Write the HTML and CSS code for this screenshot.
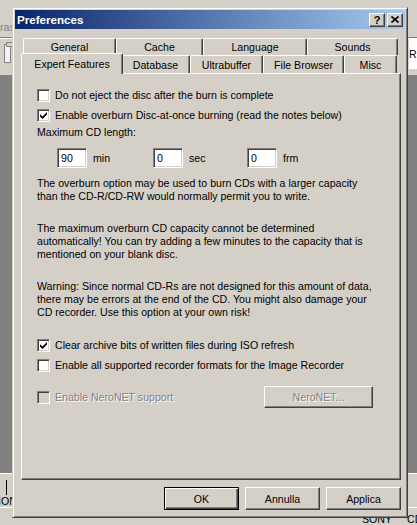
FILE: index.html
```html
<!DOCTYPE html>
<html lang="en">
<head>
    <meta charset="UTF-8">
    <meta name="viewport" content="width=device-width, initial-scale=1.0">
    <title>Preferences</title>
    <link rel="stylesheet" href="styles.css">
</head>
<body>

<!-- main application behind the dialog -->
<div id="desktop">
    <div id="toolbar">
        <div class="tb-top"><span class="tb-menu">ras</span></div>
        <div class="tb-bottom">
            <svg class="tb-icon" width="10" height="23" viewBox="0 0 10 23">
                <path d="M1.5 3.5h6v18h-6z" fill="#f4f4f4" stroke="#808080"/>
                <path d="M3.5 1.5h6v4h-6z" fill="#d4d0c8" stroke="#808080"/>
            </svg>
            <div class="tb-edit">R</div>
        </div>
    </div>
    <div id="workspace"></div>
    <div id="statusbar">
        <div class="sb-tree">
            <span class="sb-line"></span>
            <span class="sb-label">ION</span>
        </div>
        <div class="sb-list">
            <span class="sb-sony">SONY</span>
            <span class="sb-cd">CD</span>
        </div>
    </div>
</div>

<div id="prefs" class="window">
    <div class="caption">
        <span class="caption-title">Preferences</span>
        <div class="caption-buttons">
            <div class="cap-btn">?</div>
            <div class="cap-btn">
                <svg width="8" height="7" viewBox="0 0 8 7">
                    <path d="M0.5 0.5l7 6M7.5 0.5l-7 6" stroke="#000" stroke-width="1.6"/>
                </svg>
            </div>
        </div>
    </div>

    <div class="window-body">
        <div class="tab-row back">
            <div class="tab w-general">General</div>
            <div class="tab w-cache">Cache</div>
            <div class="tab w-language">Language</div>
            <div class="tab w-sounds">Sounds</div>
        </div>
        <div class="tab-row front">
            <div class="tab active w-expert">Expert Features</div>
            <div class="tab w-database">Database</div>
            <div class="tab w-ultra">Ultrabuffer</div>
            <div class="tab w-browser">File Browser</div>
            <div class="tab w-misc">Misc</div>
        </div>

        <div class="tab-panel">
            <div class="check-row">
                <span class="checkbox"></span>
                <span>Do not eject the disc after the burn is complete</span>
            </div>
            <div class="check-row">
                <span class="checkbox"><svg class="tick" width="7" height="7" viewBox="0 0 7 7"><path d="M0 2.2L2.5 4.6L7 0.1V2.6L2.5 7L0 4.6Z" fill="#000"/></svg></span>
                <span>Enable overburn Disc-at-once burning (read the notes below)</span>
            </div>

            <div class="length-label">Maximum CD length:</div>
            <div class="length-fields">
                <div class="field"><div class="edit">90</div><span>min</span></div>
                <div class="field"><div class="edit">0</div><span>sec</span></div>
                <div class="field"><div class="edit">0</div><span>frm</span></div>
            </div>

            <p class="note first">The overburn option may be used to burn CDs with a larger capacity<br>than the CD-R/CD-RW would normally permit you to write.</p>
            <p class="note">The maximum overburn CD capacity cannot be determined<br>automatically! You can try adding a few minutes to the capacity that is<br>mentioned on your blank disc.</p>
            <p class="note">Warning: Since normal CD-Rs are not designed for this amount of data,<br>there may be errors at the end of the CD. You might also damage your<br>CD recorder. Use this option at your own risk!</p>

            <div class="check-row spaced">
                <span class="checkbox"><svg class="tick" width="7" height="7" viewBox="0 0 7 7"><path d="M0 2.2L2.5 4.6L7 0.1V2.6L2.5 7L0 4.6Z" fill="#000"/></svg></span>
                <span>Clear archive bits of written files during ISO refresh</span>
            </div>
            <div class="check-row">
                <span class="checkbox"></span>
                <span>Enable all supported recorder formats for the Image Recorder</span>
            </div>

            <div class="nero-row">
                <div class="check-row">
                    <span class="checkbox disabled"></span>
                    <span class="disabled-text">Enable NeroNET support</span>
                </div>
                <div class="btn nero-btn"><span class="disabled-text">NeroNET...</span></div>
            </div>
        </div>

        <div class="dialog-buttons">
            <div class="btn default">OK</div>
            <div class="btn">Annulla</div>
            <div class="btn">Applica</div>
        </div>
    </div>
</div>

</body>
</html>
```

FILE: styles.css
```css
body {
    margin: 0;
    height: 525px;
    overflow: hidden;
    position: relative;
    background-color: #808080;
    font-family: "Liberation Sans", Arial, sans-serif;
    font-size: 10.6px;
    color: #000;
}

/* application behind the dialog */
#desktop {
    display: flex;
    flex-direction: column;
    height: 525px;
}
#toolbar {
    height: 75px;
    background-color: #d4d0c8;
}
.tb-top {
    height: 37px;
    border-bottom: 1px solid #808080;
    box-shadow: 0 1px #fff;
}
.tb-menu {
    display: block;
    padding-top: 21px;
    line-height: 13px;
    color: #808080;
}
.tb-bottom {
    display: flex;
    justify-content: space-between;
    align-items: flex-start;
}
.tb-icon {
    margin: 3px 0 0 3px;
}
.tb-edit {
    width: 8px;
    height: 30px;
    margin-top: 1px;
    background-color: #fff;
    line-height: 30px;
    overflow: hidden;
}
#workspace {
    flex: 1;
}
#statusbar {
    height: 51px;
    background-color: #d4d0c8;
    border-top: 1px solid #fff;
}
.sb-tree {
    height: 33px;
    border-bottom: 1px solid #fff;
    display: flex;
    flex-direction: column;
}
.sb-line {
    width: 1px;
    height: 15px;
    margin: 6px 0 0 6px;
    background-color: #000;
}
.sb-label {
    line-height: 12px;
    margin-left: -2px;
}
.sb-list {
    display: flex;
    padding-top: 5px;
    line-height: 13px;
}
.sb-sony {
    margin-left: 362px;
}
.sb-cd {
    margin-left: 15px;
}

/* dialog window */
.window {
    position: absolute;
    left: 12px;
    top: 7px;
    width: 396px;
    height: 511px;
    box-sizing: border-box;
    padding: 2px;
    background-color: #d4d0c8;
    border: 1px solid;
    border-color: #d4d0c8 #404040 #404040 #d4d0c8;
    box-shadow: inset 1px 1px #fff, inset -1px -1px #808080;
    display: flex;
    flex-direction: column;
}
.caption {
    height: 19px;
    padding: 0 2px;
    background: linear-gradient(to right, #0a246a, #a6caf0);
    display: flex;
    align-items: center;
    justify-content: space-between;
}
.caption-title {
    color: #fff;
    font-weight: bold;
    font-size: 11.6px;
}
.caption-buttons {
    display: flex;
    gap: 2px;
}
.cap-btn {
    width: 16px;
    height: 14px;
    box-sizing: border-box;
    background-color: #d4d0c8;
    border: 1px solid;
    border-color: #fff #404040 #404040 #fff;
    box-shadow: inset -1px -1px #808080;
    display: flex;
    align-items: center;
    justify-content: center;
    font-weight: bold;
    font-size: 11px;
}

.window-body {
    flex: 1;
    padding: 9px 4px 0 6px;
    display: flex;
    flex-direction: column;
}

/* tabs */
.tab-row {
    display: flex;
    padding-left: 2px;
}
.tab-row.back {
    height: 17px;
}
.tab-row.front {
    height: 18px;
    align-items: flex-end;
}
.tab {
    height: 100%;
    box-sizing: border-box;
    border: 1px solid;
    border-bottom: none;
    border-color: #fff #404040 transparent #fff;
    border-radius: 2px 2px 0 0;
    box-shadow: inset -1px 0 #808080;
    background-color: #d4d0c8;
    display: flex;
    align-items: center;
    justify-content: center;
}
.tab.active {
    height: 21px;
    margin: 0 -2px -1px;
    position: relative;
    z-index: 1;
}
.w-general { width: 93px; }
.w-cache { width: 87px; }
.w-language { width: 104px; }
.w-sounds { width: 91px; }
.w-expert { width: 102px; }
.w-database { width: 69px; }
.w-ultra { width: 73px; }
.w-browser { width: 81px; }
.w-misc { width: 53px; }

.tab-panel {
    height: 407px;
    box-sizing: border-box;
    padding: 11px 15px 0;
    border: 1px solid;
    border-color: #fff #404040 #404040 #fff;
    box-shadow: inset -1px -1px #808080;
}

/* controls */
.check-row {
    display: flex;
    align-items: center;
    gap: 5px;
    height: 20px;
    line-height: 13px;
    white-space: nowrap;
}
.check-row.spaced {
    margin-top: 16px;
}
.checkbox {
    width: 13px;
    height: 13px;
    box-sizing: border-box;
    flex: none;
    background-color: #fff;
    border: 1px solid;
    border-color: #808080 #fff #fff #808080;
    box-shadow: inset 1px 1px #404040, inset -1px -1px #d4d0c8;
    display: flex;
    align-items: center;
    justify-content: center;
}
.checkbox.disabled {
    background-color: #d4d0c8;
}
.disabled-text {
    color: #808080;
    text-shadow: 1px 1px #fff;
}

.length-label {
    margin-top: 1px;
    line-height: 13px;
}
.length-fields {
    display: grid;
    grid-template-columns: 96px 94px auto;
    margin: 9px 0 0 20px;
}
.field {
    display: flex;
    align-items: center;
    gap: 6px;
}
.edit {
    width: 30px;
    height: 20px;
    box-sizing: border-box;
    padding-left: 3px;
    line-height: 18px;
    background-color: #fff;
    border: 1px solid;
    border-color: #808080 #fff #fff #808080;
    box-shadow: inset 1px 1px #404040, inset -1px -1px #d4d0c8;
}

.note {
    margin: 19px 0 0;
    line-height: 13px;
    white-space: nowrap;
}
.note.first {
    margin-top: 9px;
}

.nero-row {
    display: grid;
    grid-template-columns: 227px 109px;
    align-items: center;
    margin-top: 11px;
}

/* buttons */
.btn {
    width: 75px;
    height: 23px;
    box-sizing: border-box;
    background-color: #d4d0c8;
    border: 1px solid;
    border-color: #fff #404040 #404040 #fff;
    box-shadow: inset -1px -1px #808080;
    display: flex;
    align-items: center;
    justify-content: center;
}
.btn.default {
    border-color: #000;
    box-shadow: inset 1px 1px #fff, inset -1px -1px #404040, inset -2px -2px #808080;
}
.nero-btn {
    width: 109px;
    height: 22px;
}
.dialog-buttons {
    display: flex;
    justify-content: flex-end;
    gap: 6px;
    margin-top: 7px;
}
```
